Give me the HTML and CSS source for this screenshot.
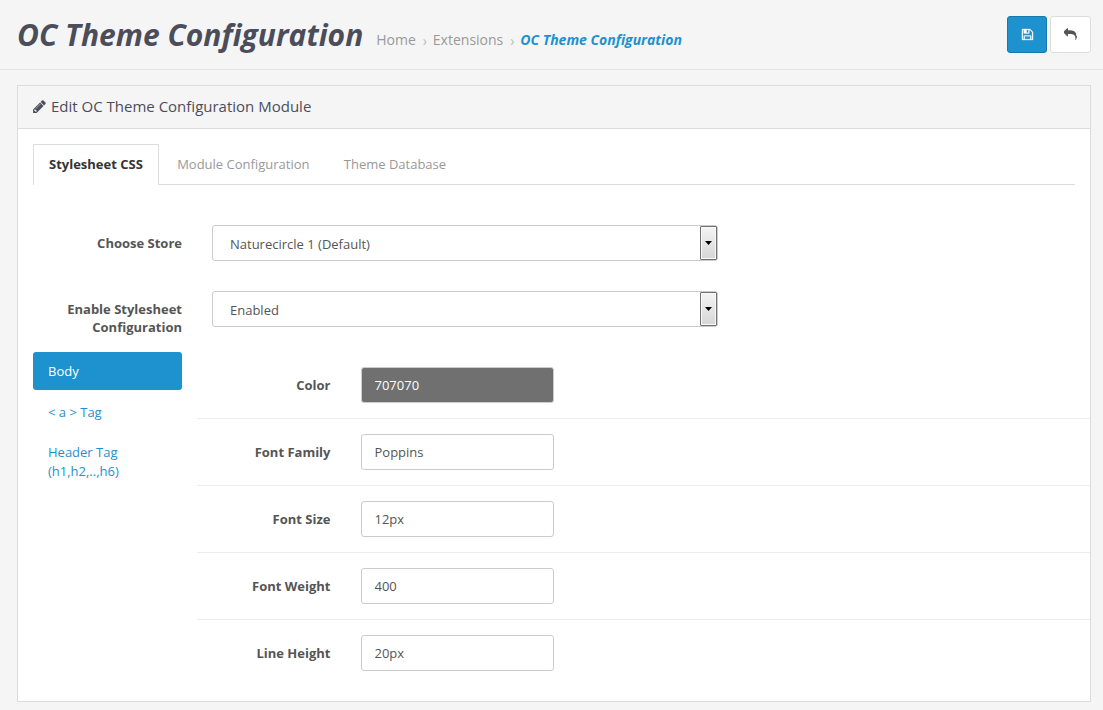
FILE: index.html
```html
<!DOCTYPE html>
<html lang="en">
<head>
<meta charset="utf-8">
<title>OC Theme Configuration</title>
<link rel="stylesheet" href="styles.css">
</head>
<body>
<header class="page-header">
  <h1>OC Theme Configuration</h1>
  <nav class="breadcrumb">
    <a class="crumb">Home</a><span class="sep">›</span><a class="crumb">Extensions</a><span class="sep">›</span><a class="crumb current">OC Theme Configuration</a>
  </nav>
  <div class="actions">
    <button class="btn btn-primary" aria-label="Save"><svg class="icon save" viewBox="0 0 1792 1792"><path d="M512 1536h768v-384h-768v384zM1408 1536h128v-896q0-14-10-38.5t-20-34.500l-281-281q-10-10-34-20t-39-10v416q0 40-28 68t-68 28h-576q-40 0-68-28t-28-68v-416h-128v1280h128v-416q0-40 28-68t68-28h832q40 0 68 28t28 68v416zM1024 608v-320q0-13-9.500-22.500t-22.500-9.500h-192q-13 0-22.500 9.500t-9.500 22.500v320q0 13 9.500 22.500t22.500 9.500h192q13 0 22.500-9.500t9.500-22.500zM1664 640v928q0 40-28 68t-68 28h-1344q-40 0-68-28t-28-68v-1344q0-40 28-68t68-28h928q40 0 88 20t76 48l280 280q28 28 48 76t20 88z"/></svg></button>
    <button class="btn btn-default" aria-label="Back"><svg class="icon" viewBox="0 0 1792 1792"><path d="M1792 1120q0 166-127 451-3 7-10.500 24t-13.500 30-13 22q-12 17-28 17-15 0-23.500-10t-8.500-25q0-9 2.500-26.500t2.500-23.500q5-68 5-123 0-112-19.500-200.500t-54-153.500-89-112-117.500-78-149.500-49.500-176.500-24-207-7.500h-224v256q0 26-19 45t-45 19-45-19l-512-512q-19-19-19-45t19-45l512-512q19-19 45-19t45 19 19 45v256h224q713 0 875 403 53 134 53 333z"/></svg></button>
  </div>
</header>
<main class="panel">
  <div class="panel-heading">
    <svg class="icon pencil" viewBox="0 0 1792 1792"><path d="M491 1536l91-91-235-235-91 91v107h128v128h107zM1014 608q0-22-22-22-10 0-17 7l-542 542q-7 7-7 17 0 22 22 22 10 0 17-7l542-542q7-7 7-17zM960 416l416 416-832 832h-416v-416zM1643 512q0 53-37 90l-166 166-416-416 166-165q36-38 90-38 53 0 91 38l235 234q37 39 37 91z"/></svg>
    <h2>Edit OC Theme Configuration Module</h2>
  </div>
  <div class="panel-body">
    <ul class="tabs">
      <li class="tab active">Stylesheet CSS</li>
      <li class="tab">Module Configuration</li>
      <li class="tab">Theme Database</li>
    </ul>
    <div class="form-group">
      <label>Choose Store</label>
      <div class="select"><span class="value">Naturecircle 1 (Default)</span><span class="drop"><svg width="7" height="4" viewBox="0 0 7 4"><path d="M0 0h7L3.500 4z"/></svg></span></div>
    </div>
    <div class="form-group">
      <label>Enable Stylesheet Configuration</label>
      <div class="select"><span class="value">Enabled</span><span class="drop"><svg width="7" height="4" viewBox="0 0 7 4"><path d="M0 0h7L3.500 4z"/></svg></span></div>
    </div>
    <div class="columns">
      <ul class="pills">
        <li class="pill active">Body</li>
        <li class="pill">&lt; a &gt; Tag</li>
        <li class="pill">Header Tag (h1,h2,..,h6)</li>
      </ul>
      <div class="fields">
        <div class="field"><label>Color</label><input class="input color" type="text" value="707070"></div>
        <div class="field"><label>Font Family</label><input class="input" type="text" value="Poppins"></div>
        <div class="field"><label>Font Size</label><input class="input" type="text" value="12px"></div>
        <div class="field"><label>Font Weight</label><input class="input" type="text" value="400"></div>
        <div class="field"><label>Line Height</label><input class="input" type="text" value="20px"></div>
      </div>
    </div>
  </div>
</main>
</body>
</html>
```
FILE: styles.css
```css
* { box-sizing: border-box; }

body {
  margin: 0;
  height: 710px;
  overflow: hidden;
  background: #f5f5f5;
  color: #555;
  font: 13px/18.57px "Open Sans", "Noto Sans", sans-serif;
}

ul { list-style: none; margin: 0; padding: 0; }
.icon { display: block; width: 13px; height: 13px; fill: currentColor; }

.page-header {
  display: flex;
  height: 70px;
  padding: 16px 12px 0 17px;
  border-bottom: 1px solid #e4e4e4;
}
h1 {
  margin: 0;
  padding-top: 1px;
  color: #4c4d5a;
  font-size: 30px;
  line-height: 36px;
  font-weight: 700;
  font-style: italic;
  white-space: nowrap;
}
.breadcrumb {
  display: flex;
  margin: 14px 0 0 13px;
  font-size: 14px;
  line-height: 20px;
  color: #999;
  white-space: nowrap;
}
.sep { width: 17px; padding: 1px 0 0 7px; color: #bbb; }
.current { color: #1e91cf; font-weight: 700; font-style: italic; }

.actions { display: flex; gap: 3px; margin-left: auto; }
.btn {
  display: flex;
  align-items: center;
  justify-content: center;
  width: 41px;
  height: 37px;
  padding: 0;
  border: 1px solid #ddd;
  border-radius: 3px;
  background: #fff;
  color: #555;
}
.btn-primary {
  width: 40px;
  background: #1e91cf;
  border-color: #1978ab;
  color: #fff;
}
.save { stroke: currentColor; stroke-width: 40; }

.panel {
  width: 1074px;
  height: 617px;
  margin: 15px 0 0 17px;
  border: 1px solid #dcdcdc;
  background: #fff;
}
.panel-heading {
  display: flex;
  align-items: center;
  gap: 4px;
  height: 43px;
  padding: 0 0 2px 14px;
  border-bottom: 1px solid #dcdcdc;
  background: #f5f5f5;
  color: #4c4d5a;
}
.pencil { width: 15px; height: 15px; }
h2 { margin: 0; font-size: 15px; line-height: 20px; font-weight: 400; }

.panel-body { padding-top: 15px; }
.tabs {
  display: flex;
  gap: 2.3px;
  height: 41px;
  margin: 0 15px 25px;
  border-bottom: 1px solid #ddd;
}
.tab {
  height: 41px;
  padding: 10px 15px;
  border: 1px solid transparent;
  border-bottom: 0;
  color: #999;
}
.tab.active {
  background: #fff;
  border-color: #ddd;
  color: #333;
  font-weight: 700;
}

label { font-weight: 700; line-height: 18px; text-align: right; }
.form-group { display: flex; gap: 30px; height: 66px; padding: 15px 15px 0; }
.form-group label { width: 149px; padding-top: 9px; }
.form-group + .columns { margin-top: 10px; }
.select {
  display: flex;
  justify-content: space-between;
  width: 506px;
  height: 36px;
  border: 1px solid #ccc;
  border-radius: 3px;
}
.value { padding: 9px 0 0 17px; }
.drop {
  display: flex;
  align-items: center;
  justify-content: center;
  width: 17px;
  border: 1px solid #707070;
  border-radius: 1px;
  background: linear-gradient(#f4f4f4, #d6d6d6);
  box-shadow: inset 0 0 0 1px #fafafa;
}

.columns { display: flex; gap: 15px; padding-left: 15px; }
.fields { flex: 1; margin-top: -15px; padding-top: 15px; }
.pills { display: flex; flex-direction: column; gap: 2px; width: 149px; }
.pill { padding: 10px 45px 10px 15px; color: #1e91cf; line-height: 19px; }
.pill + .pill { margin-top: -0.5px; }
.pill.active { height: 38px; margin-bottom: 1px; border-radius: 3px; background: #1e91cf; color: #fff; }

.field {
  display: flex;
  align-items: center;
  gap: 30.5px;
  height: 67px;
  border-bottom: 1px solid #ededed;
}
.field:last-child { border-bottom: 0; height: 66px; }
.field label { width: 133.5px; }
.input {
  width: 193px;
  height: 36px;
  padding: 0 12.5px;
  border: 1px solid #ccc;
  border-radius: 3px;
  background: #fff;
  color: #555;
  font: inherit;
}
.input.color { background: #707070; color: #fff; }
```
